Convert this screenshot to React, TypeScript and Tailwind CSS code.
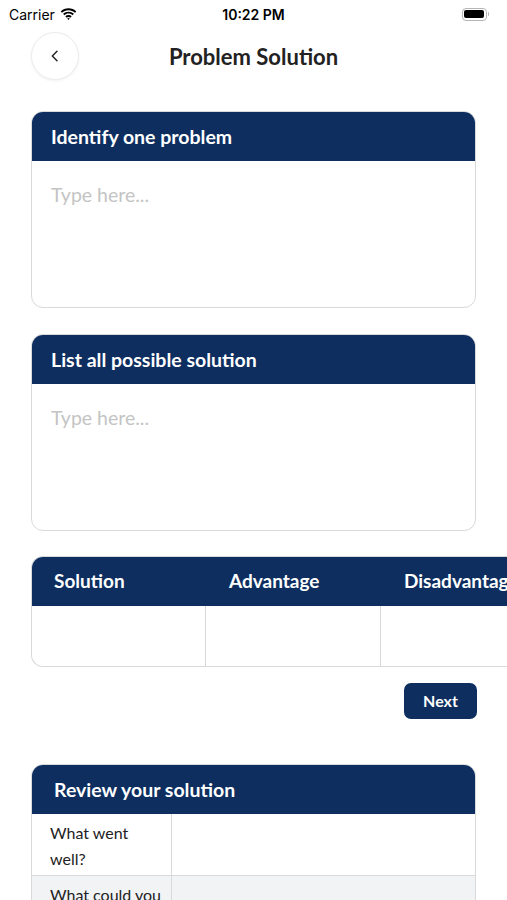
import React from 'react'

const navy = 'bg-[#0d2e5f]'

function StatusBar() {
  return (
    <div className="relative flex h-[28px] items-center px-[9px] text-[14px] text-black" style={{ fontFamily: 'Inter, sans-serif' }}>
      <div className="flex items-center gap-[5px]">
        <span>Carrier</span>
        <svg width="17" height="12" viewBox="0 0 17 12">
          <path d="M8.5 2.2c2.5 0 4.8 1 6.5 2.6l1.3-1.4C14.3 1.4 11.5.2 8.5.2S2.7 1.4.7 3.4L2 4.8c1.7-1.6 4-2.6 6.5-2.6z" fill="#000" />
          <path d="M8.5 5.6c1.6 0 3 .6 4.1 1.6l1.3-1.4C12.5 4.5 10.6 3.7 8.5 3.7S4.5 4.5 3.1 5.8l1.3 1.4c1.1-1 2.5-1.6 4.1-1.6z" fill="#000" />
          <path d="M8.5 9c.7 0 1.4.3 1.8.7l1.4-1.4C10.9 7.5 9.8 7.1 8.5 7.1s-2.4.4-3.2 1.2l1.4 1.4c.4-.4 1.1-.7 1.8-.7zM8.5 11.9l1.3-1.3c-.3-.3-.8-.5-1.3-.5s-1 .2-1.3.5z" fill="#000" />
        </svg>
      </div>
      <span className="absolute left-1/2 -translate-x-1/2 font-semibold">10:22 PM</span>
      <div className="ml-auto mr-[9px] flex items-center">
        <div className="flex h-[13px] w-[25px] items-center rounded-[4px] border border-[#b5b5b5] p-[1.5px]">
          <div className="h-full w-full rounded-[2px] bg-black" />
        </div>
        <div className="ml-[1px] h-[4px] w-[1.5px] rounded-r-sm bg-[#b5b5b5]" />
      </div>
    </div>
  )
}

function TextCard({ title }: { title: string }) {
  return (
    <div className="overflow-hidden rounded-[12px] border border-[#d9d9d9] bg-white">
      <div className={`${navy} flex h-[49px] items-center px-[19px]`}>
        <span className="text-[19.5px] font-bold text-white">{title}</span>
      </div>
      <div className="h-[146px] px-[19px] pt-[19px] text-[19.5px] text-[#c4c4c4]">Type here...</div>
    </div>
  )
}

export default function App() {
  return (
    <div className="min-h-[900px] w-[507px] overflow-hidden bg-white" style={{ fontFamily: 'Lato, sans-serif' }}>
      <StatusBar />

      <div className="relative flex h-[56px] items-center justify-center">
        <button className="absolute left-[31px] top-[4px] flex h-[48px] w-[48px] items-center justify-center rounded-full border border-[#ececec] bg-white shadow-[0_1px_3px_rgba(0,0,0,0.06)]">
          <svg width="16" height="16" viewBox="0 0 24 24" fill="none" stroke="#222" strokeWidth="2.2" strokeLinecap="round" strokeLinejoin="round">
            <path d="M15 5l-7 7 7 7" />
          </svg>
        </button>
        <h1 className="text-[22px] font-bold text-[#222]">Problem Solution</h1>
      </div>

      <div className="mt-[27px] flex flex-col gap-[26px] px-[31px]">
        <TextCard title="Identify one problem" />
        <TextCard title="List all possible solution" />
      </div>

      <div className="ml-[31px] mt-[25px] overflow-hidden">
        <div className="w-[540px] overflow-hidden rounded-l-[12px] border border-r-0 border-[#d9d9d9]">
          <div className={`${navy} grid h-[49px] grid-cols-[174px_175px_175px] items-center text-[19px] font-bold text-white`}>
            <span className="pl-[22px]">Solution</span>
            <span className="pl-[23px]">Advantage</span>
            <span className="pl-[23px]">Disadvantage</span>
          </div>
          <div className="grid h-[60px] grid-cols-[174px_175px_175px]">
            <div className="border-r border-[#d9d9d9]" />
            <div className="border-r border-[#d9d9d9]" />
            <div />
          </div>
        </div>
      </div>

      <div className="mt-[16px] flex justify-end px-[30px]">
        <button className={`${navy} h-[36px] w-[73px] rounded-[7px] text-[16px] font-bold text-white`}>Next</button>
      </div>

      <div className="mx-[31px] mt-[45px] overflow-hidden rounded-t-[12px] border border-[#d9d9d9]">
        <div className={`${navy} flex h-[49px] items-center px-[22px]`}>
          <span className="text-[19.5px] font-bold text-white">Review your solution</span>
        </div>
        <div className="grid grid-cols-[140px_1fr] border-b border-[#d9d9d9]">
          <div className="h-[61px] border-r border-[#d9d9d9] pl-[18px] pr-[6px] pt-[6px] text-[16px] leading-[26px] text-[#222]">What went well?</div>
          <div />
        </div>
        <div className="grid grid-cols-[140px_1fr] bg-[#f2f3f5]">
          <div className="h-[61px] border-r border-[#d9d9d9] pl-[18px] pr-[6px] pt-[6px] text-[16px] leading-[26px] text-[#222]">What could you do better?</div>
          <div />
        </div>
      </div>
    </div>
  )
}
